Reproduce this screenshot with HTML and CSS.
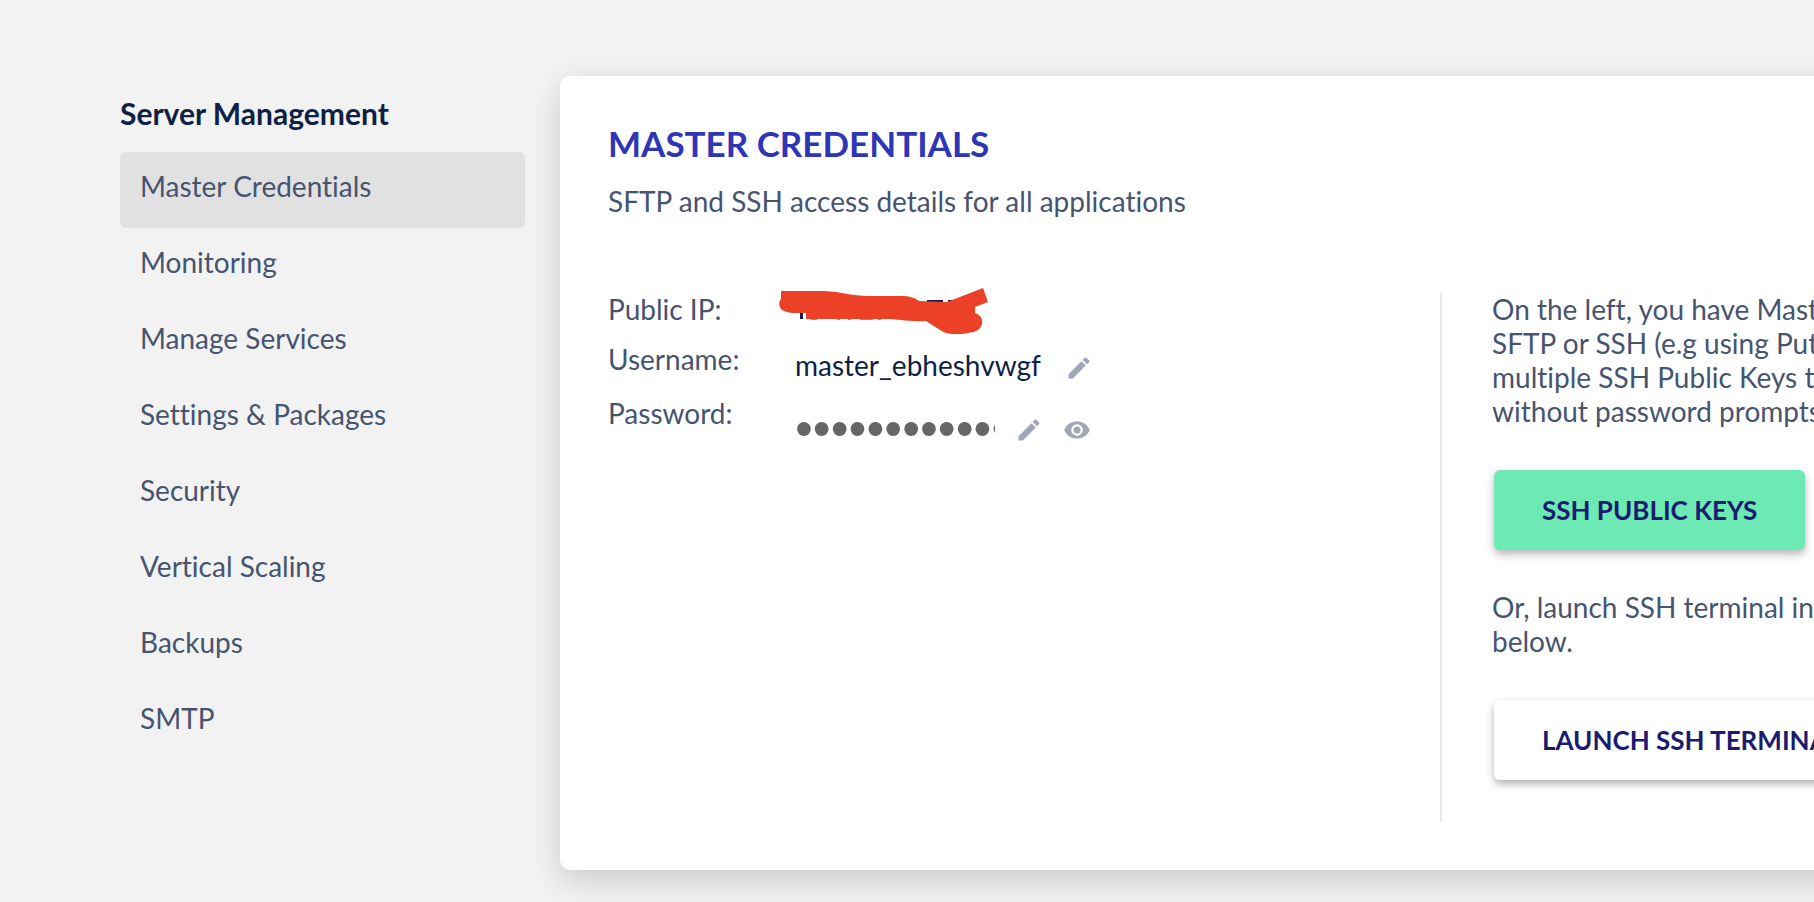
FILE: index.html
```html
<!DOCTYPE html>
<html lang="en">
<head>
    <meta charset="UTF-8">
    <meta name="viewport" content="width=device-width, initial-scale=1.0">
    <title>Server Management</title>
    <link rel="stylesheet" href="styles.css">
</head>
<body>
  <div class="page">
    <!-- Sidebar -->
    <nav class="sidebar">
        <h2>Server Management</h2>
        <a href="#" class="active">Master Credentials</a>
        <a href="#">Monitoring</a>
        <a href="#">Manage Services</a>
        <a href="#">Settings &amp; Packages</a>
        <a href="#">Security</a>
        <a href="#">Vertical Scaling</a>
        <a href="#">Backups</a>
        <a href="#">SMTP</a>
    </nav>

    <!-- Main card -->
    <main class="card">
        <h1>MASTER CREDENTIALS</h1>
        <p class="subtitle">SFTP and SSH access details for all applications</p>

        <div class="columns">
            <div class="credentials">
                <div class="row">
                    <span class="label">Public IP:</span>
                    <svg class="scribble" width="212" height="46" viewBox="0 0 212 46">
                        <path fill="#0f1f45" d="M21 22h3v9h-3zM148 12h16v4h-16zM169 12h8v4h-8zM32 30h6v1.5h-6zM58 30h3v1.5h-3zM69 30h3v1.5h-3zM81 30h13v1.5h-13zM99 30h3v1.5h-3z"/>
                        <path fill="#ec4027" d="M2 3H43C58 3 73 8 90 8H122C131 8 136 10 140 13L168 14L204 0L209 14L196 19V25C202 27 204 32 203 36C201 43 195 44 189 45C180 47 168 47 161 42L147 33C127 34 122 31 105 31H27V25C18 25 9 26 3 22C-1 18 0 13 2 11Z"/>
                    </svg>
                </div>
                <div class="row">
                    <span class="label">Username:</span>
                    <div class="value username">
                        <span>master_ebheshvwgf</span>
                        <button class="icon-btn" aria-label="Edit username">
                            <svg width="28" height="28" viewBox="0 0 24 24"><path d="M3 17.25V21h3.75L17.81 9.94l-3.75-3.75L3 17.25zM20.71 7.04a1 1 0 0 0 0-1.41l-2.34-2.34a1 1 0 0 0-1.41 0l-1.83 1.83 3.75 3.75 1.83-1.83z"/></svg>
                        </button>
                    </div>
                </div>
                <div class="row">
                    <label class="label" for="password">Password:</label>
                    <div class="value password">
                        <input type="password" id="password" value="masterpassword" readonly>
                        <button class="icon-btn" aria-label="Edit password">
                            <svg width="28" height="28" viewBox="0 0 24 24"><path d="M3 17.25V21h3.75L17.81 9.94l-3.75-3.75L3 17.25zM20.71 7.04a1 1 0 0 0 0-1.41l-2.34-2.34a1 1 0 0 0-1.41 0l-1.83 1.83 3.75 3.75 1.83-1.83z"/></svg>
                        </button>
                        <button class="icon-btn" aria-label="Show password">
                            <svg width="28" height="28" viewBox="0 0 24 24"><path d="M12 4.5C7 4.5 2.73 7.61 1 12c1.73 4.39 6 7.5 11 7.5s9.27-3.11 11-7.5c-1.73-4.39-6-7.5-11-7.5zM12 17a5 5 0 1 1 0-10 5 5 0 0 1 0 10zm0-8a3 3 0 1 0 0 6 3 3 0 0 0 0-6z"/></svg>
                        </button>
                    </div>
                </div>
            </div>

            <div class="help">
                <p>On the left, you have Master<br>SFTP or SSH (e.g using Putty)<br>multiple SSH Public Keys to<br>without password prompts.</p>
                <button class="btn btn-green">SSH PUBLIC KEYS</button>
                <p>Or, launch SSH terminal in<br>below.</p>
                <button class="btn">LAUNCH SSH TERMINAL</button>
            </div>
        </div>
    </main>
  </div>
</body>
</html>
```
FILE: styles.css
```css
* {
    box-sizing: border-box;
}
body {
    font-family: Lato, sans-serif;
    font-size: 28px;
    line-height: 34px;
    font-variant-ligatures: none;
    color: #46546f;
    background-color: #f2f2f2;
    margin: 0;
    overflow: hidden;
}
h1, h2, p {
    margin: 0;
}
.page {
    display: flex;
    align-items: flex-start;
    gap: 35px;
    padding: 76px 0 32px 120px;
}
.sidebar {
    flex: 0 0 405px;
    padding-top: 20px;
}
.sidebar h2 {
    font-size: 30px;
    font-weight: 700;
    color: #0f1f45;
    margin-bottom: 22px;
}
.sidebar a {
    display: block;
    padding: 17px 20px 25px;
    border-radius: 6px;
    color: #46546f;
    text-decoration: none;
}
.sidebar a.active {
    background-color: #e1e1e1;
}
/* card runs off the right side of the window */
.card {
    flex: 1;
    min-width: 0;
    margin-right: -48px;
    padding: 48px;
    background-color: white;
    border-radius: 10px;
    box-shadow: 0 10px 30px rgba(0, 0, 0, 0.16);
}
.card h1 {
    font-size: 35px;
    line-height: 38px;
    font-weight: 700;
    color: #2f36b5;
}
.subtitle {
    margin-top: 22px;
}
.columns {
    display: flex;
    margin-top: 74px;
}
.credentials {
    flex: 1;
}
.row {
    display: flex;
    align-items: flex-start;
    min-height: 50px;
}
.label {
    flex: 0 0 187px;
}
.scribble {
    margin: -4px 0 0 -16px;
}
.value {
    display: flex;
    align-items: flex-end;
    gap: 20px;
    color: #0f1f45;
}
.username {
    gap: 24px;
    padding: 6px 0 14px;
}
.password {
    padding-top: 16px;
}
.password input {
    width: 200px;
    height: 32px;
    padding: 0;
    border: none;
    outline: none;
    background: none;
    color: #666;
    font-family: "Liberation Sans", sans-serif;
    font-size: 51px;
}
.icon-btn {
    display: flex;
    padding: 0;
    border: none;
    background: none;
    cursor: pointer;
}
.icon-btn svg {
    fill: #a0a8b7;
}
.help {
    flex: 0 0 374px;
    min-width: 0;
    padding-left: 50px;
    padding-bottom: 42px;
    border-left: 2px solid #e8e8e8;
    white-space: nowrap;
}
.btn {
    display: block;
    height: 80px;
    margin: 42px 0 40px 2px;
    padding: 0 48px;
    border: none;
    border-radius: 6px;
    background-color: white;
    box-shadow: 0 4px 8px rgba(0, 0, 0, 0.3);
    color: #1b1c70;
    font-family: inherit;
    font-size: 26px;
    font-weight: 700;
    white-space: nowrap;
    cursor: pointer;
}
.btn:last-child {
    margin-bottom: 0;
}
.btn-green {
    background-color: #6de9b4;
}
```
